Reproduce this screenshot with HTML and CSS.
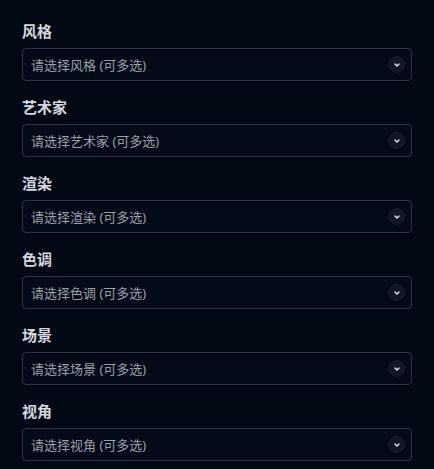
FILE: index.html
```html
<!DOCTYPE html>
<html lang="zh-CN">
<head>
<meta charset="utf-8">
<link rel="stylesheet" href="styles.css">
</head>
<body>
<div class="form">
  <div class="field">
    <div class="label">风格</div>
    <div class="select"><span class="placeholder">请选择风格 (可多选)</span><span class="chev"><svg viewBox="0 0 10 10" width="8" height="8"><path d="M2.5 3.8 L5 6.3 L7.5 3.8" fill="none" stroke="#f1f5f9" stroke-width="1.6" stroke-linecap="round" stroke-linejoin="round"/></svg></span></div>
  </div>
  <div class="field">
    <div class="label">艺术家</div>
    <div class="select"><span class="placeholder">请选择艺术家 (可多选)</span><span class="chev"><svg viewBox="0 0 10 10" width="8" height="8"><path d="M2.5 3.8 L5 6.3 L7.5 3.8" fill="none" stroke="#f1f5f9" stroke-width="1.6" stroke-linecap="round" stroke-linejoin="round"/></svg></span></div>
  </div>
  <div class="field">
    <div class="label">渲染</div>
    <div class="select"><span class="placeholder">请选择渲染 (可多选)</span><span class="chev"><svg viewBox="0 0 10 10" width="8" height="8"><path d="M2.5 3.8 L5 6.3 L7.5 3.8" fill="none" stroke="#f1f5f9" stroke-width="1.6" stroke-linecap="round" stroke-linejoin="round"/></svg></span></div>
  </div>
  <div class="field">
    <div class="label">色调</div>
    <div class="select"><span class="placeholder">请选择色调 (可多选)</span><span class="chev"><svg viewBox="0 0 10 10" width="8" height="8"><path d="M2.5 3.8 L5 6.3 L7.5 3.8" fill="none" stroke="#f1f5f9" stroke-width="1.6" stroke-linecap="round" stroke-linejoin="round"/></svg></span></div>
  </div>
  <div class="field">
    <div class="label">场景</div>
    <div class="select"><span class="placeholder">请选择场景 (可多选)</span><span class="chev"><svg viewBox="0 0 10 10" width="8" height="8"><path d="M2.5 3.8 L5 6.3 L7.5 3.8" fill="none" stroke="#f1f5f9" stroke-width="1.6" stroke-linecap="round" stroke-linejoin="round"/></svg></span></div>
  </div>
  <div class="field">
    <div class="label">视角</div>
    <div class="select"><span class="placeholder">请选择视角 (可多选)</span><span class="chev"><svg viewBox="0 0 10 10" width="8" height="8"><path d="M2.5 3.8 L5 6.3 L7.5 3.8" fill="none" stroke="#f1f5f9" stroke-width="1.6" stroke-linecap="round" stroke-linejoin="round"/></svg></span></div>
  </div>
</div>
</body>
</html>
```
FILE: styles.css
```css
html, body {
  margin: 0;
  padding: 0;
  background: #030815;
  height: 100%;
  overflow: hidden;
}
body {
  font-family: "Noto Sans", "Noto Sans CJK SC", sans-serif;
}
.form {
  display: flex;
  flex-direction: column;
  gap: 15px;
  padding: 20px 22px 0 22px;
}
.field {
  display: flex;
  flex-direction: column;
  gap: 6px;
}
.label {
  font-size: 15px;
  line-height: 22px;
  font-weight: 700;
  color: #d4d8de;
}
.select {
  box-sizing: border-box;
  height: 33px;
  border: 1px solid #2c3444;
  border-radius: 4px;
  background: #040a17;
  display: flex;
  align-items: center;
  justify-content: space-between;
  padding: 0 6px 0 8px;
}
.placeholder {
  font-size: 13px;
  color: #9aa0aa;
  line-height: 18px;
}
.chev {
  width: 15px;
  height: 15px;
  border-radius: 50%;
  background: #0f1726;
  border: 1px solid #151d2c;
  display: flex;
  align-items: center;
  justify-content: center;
}
.chev svg { display: block; }
```
